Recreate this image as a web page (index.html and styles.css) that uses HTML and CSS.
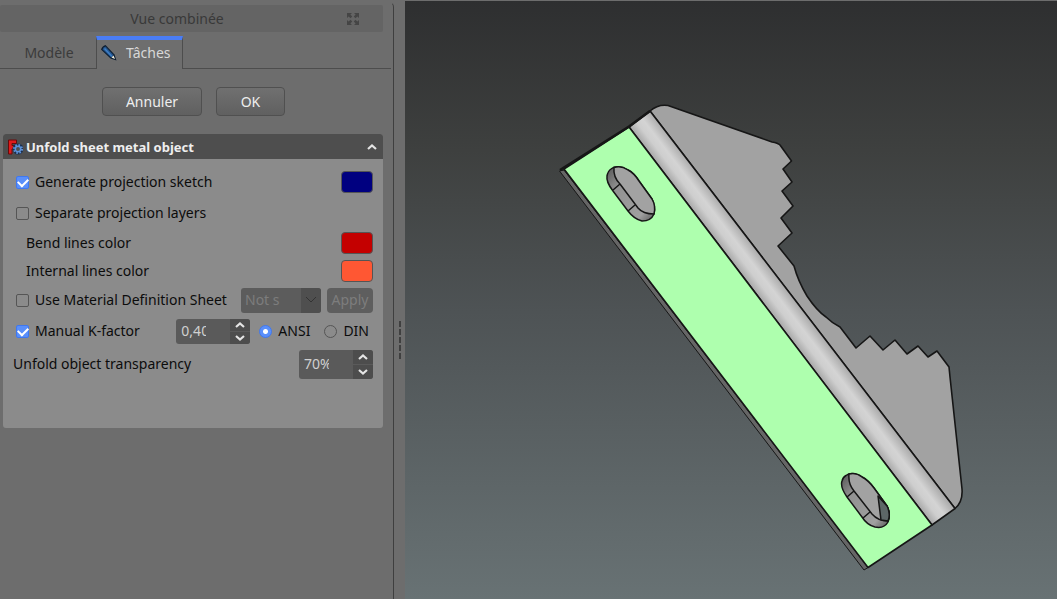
FILE: index.html
```html
<!DOCTYPE html>
<html lang="fr">
<head>
    <meta charset="UTF-8">
    <meta name="viewport" content="width=device-width, initial-scale=1.0">
    <title>Unfold sheet metal object</title>
    <link rel="stylesheet" href="styles.css">
</head>
<body>
    <aside class="sidebar">
        <header class="dock-title">
            <span>Vue combinée</span>
            <button type="button" class="float-button" aria-label="Détacher">
                <svg width="12" height="12" viewBox="0 0 12 12">
                    <path d="M0 0h5L3.400 1.600 5.200 3.600 3.600 5.200 1.600 3.400 0 5zM12 0v5l-1.600-1.600-2 1.800-1.600-1.600 1.800-2L7 0zM0 12V7l1.600 1.600 2-1.800 1.600 1.600-1.800 2L5 12zM12 12H7l1.600-1.600-1.800-2 1.600-1.600 2 1.800L12 7z"/>
                </svg>
            </button>
        </header>

        <nav class="tabs">
            <button type="button" class="tab">Modèle</button>
            <button type="button" class="tab active">
                <svg width="16" height="16" viewBox="0 0 16 16">
                    <path d="M0 4.500Q1 1 4.500 0L13.500 9.500 15.500 15.500 9.500 13.500z" fill="#0b1c30"/>
                    <path d="M1.500 4.500Q2 2 4.500 1.500L12.500 10 10 12.500z" fill="#24548a"/>
                    <path d="M3.500 3.500l7.500 8" stroke="#3f7fc6" stroke-width="1.500"/>
                    <path d="M12.500 10.500l1.500 3.500-3.500-1.500z" fill="#f4f0e0"/>
                </svg>
                Tâches
            </button>
        </nav>

        <div class="actions">
            <button type="button" class="button cancel">Annuler</button>
            <button type="button" class="button ok">OK</button>
        </div>

        <section class="panel">
            <header class="panel-header">
                <svg width="16" height="16" viewBox="0 0 16 16">
                    <path d="M1.500 1h8v3.500H5v2h3V10H5v5H1.500z" fill="#e01b1b" stroke="#6a0a0a"/>
                    <circle cx="11" cy="10" r="4" fill="none" stroke="#1d2f4c" stroke-width="3"/>
                    <circle cx="11" cy="10" r="4" fill="none" stroke="#5d92d8" stroke-width="2" stroke-dasharray="1.570 1.570"/>
                    <circle cx="11" cy="10" r="2.700" fill="#4e4e4e" stroke="#5d92d8" stroke-width="1.500"/>
                </svg>
                <h1>Unfold sheet metal object</h1>
                <button type="button" class="collapse" aria-label="Replier">
                    <svg width="10" height="6" viewBox="0 0 10 6"><path d="M1 5l4-3.500L9 5"/></svg>
                </button>
            </header>

            <form class="options">
                <div class="row row-tall">
                    <input type="checkbox" id="sketch" checked>
                    <label for="sketch">Generate projection sketch</label>
                    <button type="button" class="swatch navy" aria-label="Sketch color"></button>
                </div>
                <div class="row">
                    <input type="checkbox" id="layers">
                    <label for="layers">Separate projection layers</label>
                </div>
                <div class="row indent">
                    <label for="bend">Bend lines color</label>
                    <button type="button" id="bend" class="swatch red"></button>
                </div>
                <div class="row row-short indent">
                    <label for="internal">Internal lines color</label>
                    <button type="button" id="internal" class="swatch orange"></button>
                </div>
                <div class="row">
                    <input type="checkbox" id="material">
                    <label for="material">Use Material Definition Sheet</label>
                    <div class="select-box">
                        <select disabled aria-label="Material sheet">
                            <option>Not s</option>
                        </select>
                        <svg width="20" height="25" viewBox="0 0 20 25"><path d="M5 9l5 5 5-5"/></svg>
                    </div>
                    <button type="button" class="apply" disabled>Apply</button>
                </div>
                <div class="row row-tall">
                    <input type="checkbox" id="kfactor" checked>
                    <label for="kfactor" class="kfactor-label">Manual K-factor</label>
                    <div class="spin">
                        <input type="text" value="0,40" aria-label="K-factor">
                        <div class="steps">
                            <button type="button" aria-label="Plus"><svg width="10" height="6" viewBox="0 0 10 6"><path d="M1 5l4-3.500L9 5"/></svg></button>
                            <button type="button" aria-label="Moins"><svg width="10" height="6" viewBox="0 0 10 6"><path d="M1 1l4 3.500L9 1"/></svg></button>
                        </div>
                    </div>
                    <input type="radio" name="standard" id="ansi" checked>
                    <label for="ansi" class="ansi-label">ANSI</label>
                    <input type="radio" name="standard" id="din">
                    <label for="din">DIN</label>
                </div>
                <div class="row row-spin">
                    <label for="transparency">Unfold object transparency</label>
                    <div class="spin spin-tall">
                        <input type="text" id="transparency" value="70%">
                        <div class="steps">
                            <button type="button" aria-label="Plus"><svg width="10" height="6" viewBox="0 0 10 6"><path d="M1 5l4-3.500L9 5"/></svg></button>
                            <button type="button" aria-label="Moins"><svg width="10" height="6" viewBox="0 0 10 6"><path d="M1 1l4 3.500L9 1"/></svg></button>
                        </div>
                    </div>
                </div>
            </form>
        </section>
    </aside>

    <div class="splitter">
        <span></span><span></span><span></span><span></span><span></span>
    </div>

    <main class="viewport">
        <svg class="model" viewBox="405 1 652 598" role="img" aria-label="Sheet metal part">
            <defs>
                <linearGradient id="bendShade" gradientUnits="userSpaceOnUse" x1="740" y1="273" x2="761" y2="257">
                    <stop offset="0" stop-color="#a6a6a6"/>
                    <stop offset="0.350" stop-color="#cecece"/>
                    <stop offset="0.600" stop-color="#d4d4d4"/>
                    <stop offset="1" stop-color="#aeaeae"/>
                </linearGradient>
                <linearGradient id="slotShade" x1="0" y1="0" x2="1" y2="1">
                    <stop offset="0" stop-color="#555"/>
                    <stop offset="0.300" stop-color="#929292"/>
                    <stop offset="0.800" stop-color="#a0a0a0"/>
                    <stop offset="1" stop-color="#555"/>
                </linearGradient>
            </defs>
            <g stroke="#161616" stroke-width="1.600" stroke-linejoin="round">
                <!-- toothed flange -->
                <path fill="#a2a2a2" d="M650 111Q658 104 668 105.500L772 142Q778 143 780 145L791.500 161 783 169 792 182 782 191 793 206 781 218 792 233 778 246 794 266Q798 281 807 296Q817 311 826 317Q832 323 840 327L856 348 870 336 883 350 895 340 907 354 918 346 928 357 937 351 949 367 950 377 962 489Q963 502 955 508.500z"/>
                <!-- bend -->
                <path fill="url(#bendShade)" d="M629 127L650 111 955 508.500 932 525z"/>
                <!-- thickness on the left edge -->
                <path fill="#666" stroke-width="1" d="M564 170L559.500 171 864 570 868 567.500z"/>
                <!-- main face -->
                <path fill="#aeffae" d="M564 169L629 127 932 525 868 567.500z"/>
                <path fill="none" stroke-width="2.500" d="M560 170L629 126.500 650 111"/>
            </g>
            <g stroke="#161616" stroke-width="1.500" stroke-linejoin="round">
                <path fill="url(#slotShade)" d="M611 169Q617 164 628 170Q634 173 639 181L652 199Q656 206 654 214Q651 221 642 221Q634 219 628 211L613 191Q606 182 607 176Q608 171 611 169z"/>
                <path fill="#a2a2a2" d="M614 167.500Q621 165 628 170Q634 173 639 181L652 199Q656 206 654 214Q643 214 638 208L620 184Q613 177 614 167.500z"/>
                <path fill="none" d="M613 190L620 184M628 211L635 205"/>
            </g>
            <g stroke="#161616" stroke-width="1.500" stroke-linejoin="round">
                <path fill="url(#slotShade)" d="M846 475.500Q852 471 862 477Q868 480 874 488L887 506Q891 514 888 522Q884 529 875 527Q867 525 862 517L847 497Q840 487 842 481Q843 477 846 475.500z"/>
                <path fill="#a2a2a2" d="M849 474Q856 472 862 477Q868 480 874 488L887 506Q891 514 888 521Q878 521 872 514L854 491Q848 484 849 474z"/>
                <path fill="#5d6767" d="M878 496L887 506Q891 514 888 521L881 520z"/>
                <path fill="none" d="M847 497L854 491M863 518L870 512"/>
            </g>
        </svg>
    </main>
</body>
</html>
```

FILE: styles.css
```css
* {
    box-sizing: border-box;
}
body {
    margin: 0;
    height: 100vh;
    display: flex;
    overflow: hidden;
    background: #6d6d6d;
    color: #0c0c0c;
    font-family: "Noto Sans", sans-serif;
    font-size: 14px;
    line-height: 20px;
}
button, input, select {
    font: inherit;
    color: inherit;
    margin: 0;
    padding: 0;
    border: 0;
    background: none;
}
svg {
    display: block;
    flex: none;
}
.sidebar {
    flex: none;
    width: 394px;
    margin-top: 2px;
    padding: 3px 10px 0 0;
    border-right: 1px solid #3f3f3f;
    border-top: 1px solid #6d6d6d;
    border-top-right-radius: 5px;
}
.dock-title {
    display: flex;
    align-items: center;
    height: 27px;
    margin-top: -1px;
    padding: 0 24px 0 0;
    background: #646464;
    border-radius: 2px;
    color: #393939;
}
.dock-title span {
    flex: 1;
    text-align: center;
    padding-left: 7px;
}
.float-button svg {
    fill: #454545;
}

/* Tabs */
.tabs {
    display: flex;
    align-items: flex-end;
    height: 37px;
    margin-right: -8px;
    background: linear-gradient(#4d4d4d, #4d4d4d) bottom / 100% 1px no-repeat;
}
.tab {
    width: 96px;
    height: 33px;
    padding-left: 2px;
    color: #3b3b3b;
}
.tab.active {
    display: flex;
    align-items: center;
    gap: 9px;
    width: 87px;
    padding: 0 0 4px 4px;
    background: #6e6e6e;
    border: solid #4d4d4d;
    border-width: 0 1px;
    border-top: 4px solid #4a7df5;
    color: #d8d8d8;
}

.actions {
    display: flex;
    justify-content: center;
    gap: 14px;
    margin: 18px 0;
    padding-left: 4px;
}
.button {
    height: 29px;
    border: 1px solid #505050;
    border-radius: 4px;
    background: linear-gradient(#707070, #606060);
    color: #eee;
}
.cancel {
    width: 100px;
}
.ok {
    width: 69px;
}

/* Task panel */
.panel {
    margin-left: 3px;
    background: #8b8b8b;
    border-radius: 3px;
}
.panel-header {
    display: flex;
    align-items: center;
    gap: 3px;
    height: 25px;
    padding: 0 6px 0 4px;
    background: #4e4e4e;
    border-radius: 3px 3px 0 0;
    color: #eee;
}
.panel-header h1 {
    flex: 1;
    margin: 0;
    font-size: 13px;
    line-height: 20px;
}
.collapse path, .steps path {
    fill: none;
    stroke: #e4e4e4;
    stroke-width: 2.2;
}
.options {
    padding: 7px 10px 47px;
}
.row {
    display: flex;
    align-items: center;
    height: 30px;
}
.row-tall {
    height: 32px;
}
.row-spin {
    height: 34px;
}
.indent {
    height: 29px;
    padding-left: 13px;
}
.row-short {
    height: 28px;
}
input[type="checkbox"], input[type="radio"] {
    appearance: none;
    flex: none;
    width: 13px;
    height: 13px;
    margin: 0 6px 0 3px;
    border: 1px solid #555;
    border-radius: 2px;
}
input[type="checkbox"]:checked {
    border-color: #3f78f0;
    background: #5a8ffa;
}
input[type="checkbox"]:checked::after {
    content: "";
    display: block;
    width: 8px;
    height: 5px;
    margin: 2px 0 0 2px;
    border: solid #fff;
    border-width: 0 0 2px 2px;
    transform: rotate(-45deg);
}
input[type="radio"] {
    border-radius: 50%;
    margin-left: 0;
}
input[type="radio"]:checked {
    border-color: #3f78f0;
    background: radial-gradient(circle, #fff 2px, #5a8ffa 3px);
}
input[type="checkbox"]:checked::after {
    margin: 1px 0 0 1px;
}
.swatch {
    width: 32px;
    height: 22px;
    margin-left: auto;
    border: 1px solid #555;
    border-radius: 4px;
}
.navy {
    background: #000080;
}
.red {
    background: #c40000;
}
.orange {
    background: #ff5733;
}
.select-box {
    display: grid;
    grid-template-columns: 1fr 20px;
    width: 80px;
    height: 25px;
    margin-left: auto;
    overflow: hidden;
    border-radius: 3px;
    background: #5c5c5c;
}
.select-box select {
    appearance: none;
    padding-left: 4px;
    color: #7d7d7d;
    opacity: 1;
}
.select-box svg {
    background: #4f4f4f;
    fill: none;
    stroke: #333;
}
.apply {
    width: 46px;
    height: 25px;
    margin-left: 6px;
    border-radius: 4px;
    background: #5e5e5e;
    color: #7d7d7d;
}
.kfactor-label {
    flex: 1;
}
.ansi-label {
    margin-right: 14px;
}
.row label:last-child {
    padding-right: 4px;
}
.spin {
    display: flex;
    width: 74px;
    height: 25px;
    margin-right: 9px;
    overflow: hidden;
    border-radius: 3px;
    background: #5a5a5a;
    color: #d0d0d0;
}
.spin input {
    width: 54px;
    padding: 0 24px 0 5px;
}
.steps {
    display: grid;
    flex: 1;
    grid-template-rows: 1fr 1fr;
    background: #4d4d4d;
}
.steps button {
    display: grid;
    place-items: center;
}
.steps button + button {
    border-top: 1px solid #5a5a5a;
}
.spin-tall {
    height: 29px;
    margin: 0 0 0 auto;
}

/* Splitter and 3D view */
.splitter {
    display: flex;
    flex: none;
    flex-direction: column;
    align-items: center;
    justify-content: center;
    gap: 2px;
    width: 11px;
    padding-top: 80px;
}
.splitter span {
    width: 2px;
    height: 6px;
    background: #3f3f3f;
}
.viewport {
    flex: 1;
    min-width: 0;
    margin-top: 1px;
    background: linear-gradient(#2e2f30, #3e403f 25%, #4e5355 52%, #687274);
}
.model {
    width: 100%;
    height: 100%;
}
```
